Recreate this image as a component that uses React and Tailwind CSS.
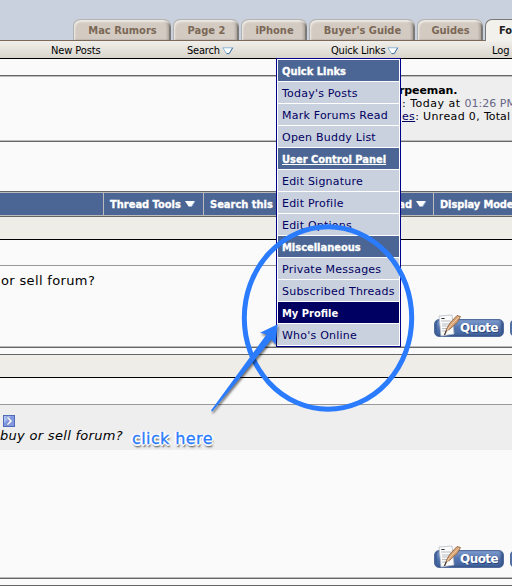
import clsx from "clsx";

const tabs = [
  { label: "Mac Rumors", width: "w-[98px]" },
  { label: "Page 2", width: "w-[66px]" },
  { label: "iPhone", width: "w-[66px]" },
  { label: "Buyer's Guide", width: "w-[106px]" },
  { label: "Guides", width: "w-[66px]" },
];

const menu = [
  { label: "Quick Links", type: "head" },
  { label: "Today's Posts" },
  { label: "Mark Forums Read" },
  { label: "Open Buddy List" },
  { label: "User Control Panel", type: "head", underline: true },
  { label: "Edit Signature" },
  { label: "Edit Profile" },
  { label: "Edit Options" },
  { label: "Miscellaneous", type: "head" },
  { label: "Private Messages" },
  { label: "Subscribed Threads" },
  { label: "My Profile", type: "active" },
  { label: "Who's Online" },
];

const condensed = "font-['DejaVu_Sans_Condensed','DejaVu_Sans',sans-serif] [font-stretch:condensed]";

const NavArrow = () => (
  <svg width="12" height="8" viewBox="0 0 12 8" className="ml-[2px]">
    <path d="M0.8 0.8H10.7L7.2 6.6H4.6Z" fill="#fff" stroke="#8db4d6" />
    <path d="M10.7 0.8L7.2 6.6H4.6" fill="none" stroke="#47749f" />
  </svg>
);

const BarArrow = () => (
  <svg width="10" height="6" viewBox="0 0 10 6" className="ml-[4px]">
    <path d="M0 0H10L6.6 5.5H3.6Z" fill="#fff" />
    <path d="M10 0L6.6 5.5" stroke="#9db7d6" />
  </svg>
);

const Tab = ({ label, width }) => (
  <div
    className={clsx(
      width,
      "mr-[2px] h-[21px] shrink-0 rounded-t-[7px] border-t border-l border-[#b3b3b3] bg-[#d3cbc2] text-center text-[11px] leading-[21px] font-bold text-[#7b6857] shadow-[inset_1px_2px_2px_#efebe6,inset_-2px_0_1px_#77736e,inset_-4px_0_2px_#b5aea6]"
    )}
  >
    {label}
  </div>
);

// paper + feather on a blue pill
const QuoteButton = () => (
  <div className="relative mt-1 h-[18px] w-[70px] shrink-0 rounded-[5px] border border-[#526c9d] bg-linear-to-b from-[#7d9bcd] via-[#5273ad] to-[#42639c] pl-[25px] font-['DejaVu_Sans'] text-[12px] leading-[16px] font-bold tracking-[-0.55px] text-white shadow-[inset_-2px_-1px_2px_#38558b,inset_2px_0_1px_#3e5f97] [text-shadow:1px_1px_0_#29447a]">
    Quote
    <svg width="24" height="24" viewBox="0 0 24 24" className="absolute -top-[6px] left-[3px]">
      <path d="M1 2L14 1L16 20L3 22Z" fill="#fbfbfb" stroke="#b8bcc5" strokeWidth="0.8" />
      <path d="M3 4.5H7M3 7H13M4 10H13M4 12H13M4 14.5H9M4 17H9" stroke="#a9adb5" strokeWidth="0.8" />
      <path d="M3.5 4.5H6.5" stroke="#333" />
      <path d="M6.5 21L8.5 15L12 9L19 1.5L22.5 2.5L19.5 8L12 15L8.5 17Z" fill="#d7a374" stroke="#8a6144" strokeWidth="0.8" />
      <path d="M7 20L12 12L21 3" fill="none" stroke="#f0cfa9" strokeWidth="0.9" />
      <path d="M6.5 21L8.5 16.5" stroke="#333" />
    </svg>
  </div>
);

const Buttons = ({ className }) => (
  <div className={clsx("flex gap-[6px] pl-[434px]", className)}>
    <QuoteButton />
    <div className="mt-1 h-[18px] w-[70px] shrink-0 rounded-[5px] border border-[#526c9d] bg-[#5273ad]" />
  </div>
);

const QuickMenu = () => (
  <div className="absolute top-[58px] left-[276px] flex w-[125px] flex-col gap-px border border-[#00008b] bg-white p-px">
    {menu.map((item) => (
      <div
        key={item.label}
        className={clsx(
          "h-[21px] pl-1 text-[11px] leading-[24px] whitespace-nowrap",
          !item.type && "bg-[#cad1de] tracking-[0.22px] text-[#000063]",
          item.type === "head" && "bg-[#4b6694] font-bold text-white [-webkit-text-stroke:0.3px_#fff]",
          item.type === "active" && "bg-[#000063] font-bold text-white",
          item.type && condensed,
          item.underline && "underline"
        )}
      >
        {item.label}
      </div>
    ))}
  </div>
);

const Annotation = () => (
  <svg width="512" height="586" viewBox="0 0 512 586" className="absolute top-0 left-0">
    <ellipse cx="328" cy="318" rx="83.7" ry="91.2" fill="none" stroke="#2a7bfd" strokeWidth="5" />
    <path
      d="M277.7 324.3L260 332.7L266.5 334.5L211 410.5L212.3 411.5L271.5 339.5L275.5 344.5Z"
      fill="#2a7bfd"
      className="drop-shadow-[1px_2px_1px_rgba(0,0,0,0.55)]"
    />
  </svg>
);

export default function App() {
  return (
    <div className="relative h-[586px] w-[512px] overflow-hidden bg-[#fafafa] font-['DejaVu_Sans',sans-serif] text-black">
      {/* Tabs */}
      <header className={clsx("flex h-[41px] items-end border-b border-[#7b6857] bg-[#cad1de] pl-[73px]", condensed)}>
        {tabs.map((tab) => (
          <Tab key={tab.label} {...tab} />
        ))}
        <div className="relative -mb-px h-[22px] w-[60px] shrink-0 rounded-tl-[7px] border-t border-l border-[#777] bg-[#f3f1ec] pl-[13px] text-[11px] leading-[21px] font-bold text-[#222]">
          Fo
        </div>
      </header>

      {/* Nav */}
      <nav
        className={clsx(
          "grid h-[18px] grid-cols-[136px_144px_161px_60px] border-b border-black bg-linear-to-b from-[#f1efeb] to-[#d9d5cc] pl-[51px] text-[11px] leading-[19px] whitespace-nowrap",
          condensed
        )}
      >
        <span className="tracking-[-0.1px]">New Posts</span>
        <span className="flex items-center tracking-[-0.2px]">Search<NavArrow /></span>
        <span className="flex items-center tracking-[-0.2px]">Quick Links<NavArrow /></span>
        <span>Log</span>
      </nav>

      {/* Welcome box */}
      <section className="mt-4 flex h-[67px] justify-end border-t border-b border-t-[#666] border-b-[#666]">
        <div className="flex w-full justify-end border-t border-b border-[#bbb]">
          <div className="w-[172px] bg-[#eee] pt-[7px] pl-[60px] text-[11px] leading-[13px] whitespace-nowrap">
            <div className="-ml-px font-bold tracking-[-0.1px]">rpeeman.</div>
            <div className="pl-[2px] tracking-[0.5px]">
              : Today at <span className="tracking-normal text-[#666686]">01:26 PM</span>
            </div>
            <div className="pl-[2px] tracking-[0.35px]">
              <span className="text-[#000063] underline">es</span>: Unread 0, <span className="tracking-[0.1px]">Total</span>
            </div>
          </div>
        </div>
      </section>

      {/* Thread bar */}
      <section className={clsx("mt-[49px] border-t border-b border-[#666] text-[11px] font-bold text-white [-webkit-text-stroke:0.3px_#fff]", condensed)}>
        <div className="grid h-6 grid-cols-[103px_100px_230px_79px] border-t border-b border-[#bbb] bg-[#4b6694] leading-[24px] whitespace-nowrap">
          <span />
          <span className="flex h-[22px] items-start border-l border-[#bbb] pl-[6px]">
            Thread Tools<span className="pt-[8px] leading-none"><BarArrow /></span>
          </span>
          <span className="flex h-[22px] items-start justify-between border-l border-[#bbb] pr-[7px] pl-[6px]">
            <span>Search this</span>
            <span className="flex items-start">
              Rate Thread<span className="pt-[8px] leading-none"><BarArrow /></span>
            </span>
          </span>
          <span className="h-[22px] border-l border-[#bbb] pl-[6px] tracking-[-0.1px]">Display Mode</span>
        </div>
      </section>
      <div className="h-[23px] border-b border-black bg-[#efede8]" />

      {/* First post */}
      <article className="h-[108px] border-b border-[#666] pt-[25px]">
        <div className="h-[82px] border-t border-b border-t-[#999] border-b-[#bbb]">
          <p className="h-[53px] pt-[6px] pl-px text-[13px] leading-[18px] tracking-[0.35px]">or sell forum?</p>
          <Buttons className="-mt-[4px]" />
        </div>
      </article>

      {/* Second post */}
      <article className="mt-[6px] h-[225px] border-t border-b border-[#666]">
        <div className="h-[23px] border-b border-black bg-[#efede8]" />
        <div className="h-[26px]" />
        <div className="h-[46px] border-t border-[#999] bg-[#eee] pt-[10px]">
          <svg width="12" height="12" viewBox="0 0 12 12" className="ml-[3px]">
            <rect x="0.5" y="0.5" width="11" height="11" fill="#8398e2" stroke="#526bb8" />
            <path d="M1 1H8L1 8Z" fill="#a9c0f3" />
            <path d="M3 2H5.5L9.5 6L5.5 10H3L6.5 6Z" fill="#fff" stroke="#3f538f" strokeWidth="0.4" />
          </svg>
          <p className="text-[13px] leading-[18px] tracking-[0.3px] italic">buy or sell forum?</p>
        </div>
        <Buttons className="mt-[96px]" />
        <div className="mt-[9px] h-px bg-[#bbb]" />
      </article>
      <div className="mt-[6px] h-px bg-[#666]" />

      <QuickMenu />
      <Annotation />
      <span className="absolute top-[428px] left-[132px] text-[16px] leading-[22px] tracking-[0.4px] whitespace-nowrap text-[#2a7bfd] [-webkit-text-stroke:0.3px_#2a7bfd] [text-shadow:-1px_0_0_#fff,1px_0_0_#fff,0_-1px_0_#fff,0_1px_0_#fff,-1px_-1px_0_#fff,1px_-1px_0_#fff,-1px_1px_0_#fff,1px_1px_0_#fff,-2px_0_0_#fff,2px_0_0_#fff,0_2px_0_#fff,1px_3px_2px_rgba(0,0,0,0.85)]">
        click here
      </span>
    </div>
  );
}
